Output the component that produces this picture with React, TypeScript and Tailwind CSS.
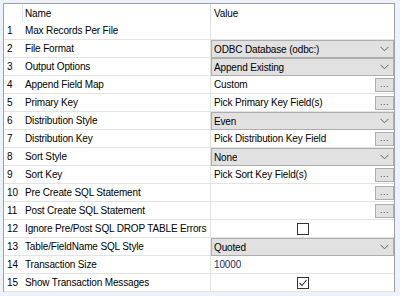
import React from 'react';

type Kind = 'none' | 'combo' | 'pick' | 'check' | 'text';

interface Prop {
  id: number;
  name: string;
  kind: Kind;
  value?: string;
  checked?: boolean;
}

const props: Prop[] = [
  { id: 1, name: 'Max Records Per File', kind: 'none' },
  { id: 2, name: 'File Format', kind: 'combo', value: 'ODBC Database (odbc:)' },
  { id: 3, name: 'Output Options', kind: 'combo', value: 'Append Existing' },
  { id: 4, name: 'Append Field Map', kind: 'pick', value: 'Custom' },
  { id: 5, name: 'Primary Key', kind: 'pick', value: 'Pick Primary Key Field(s)' },
  { id: 6, name: 'Distribution Style', kind: 'combo', value: 'Even' },
  { id: 7, name: 'Distribution Key', kind: 'pick', value: 'Pick Distribution Key Field' },
  { id: 8, name: 'Sort Style', kind: 'combo', value: 'None' },
  { id: 9, name: 'Sort Key', kind: 'pick', value: 'Pick Sort Key Field(s)' },
  { id: 10, name: 'Pre Create SQL Statement', kind: 'pick', value: '' },
  { id: 11, name: 'Post Create SQL Statement', kind: 'pick', value: '' },
  { id: 12, name: 'Ignore Pre/Post SQL DROP TABLE Errors', kind: 'check', checked: false },
  { id: 13, name: 'Table/FieldName SQL Style', kind: 'combo', value: 'Quoted' },
  { id: 14, name: 'Transaction Size', kind: 'text', value: '10000' },
  { id: 15, name: 'Show Transaction Messages', kind: 'check', checked: true },
];

function Chevron() {
  return (
    <svg width="9" height="6" viewBox="0 0 9 6" className="shrink-0">
      <path d="M0.5 0.8 L4.5 4.8 L8.5 0.8" fill="none" stroke="#606060" strokeWidth="1" />
    </svg>
  );
}

function ValueCell({ p }: { p: Prop }) {
  if (p.kind === 'combo') {
    return (
      <div className="h-full flex items-center justify-between bg-[#e1e1e1] border border-[#adadad] pl-[2px] pr-[4px]">
        <span className="truncate">{p.value}</span>
        <Chevron />
      </div>
    );
  }
  if (p.kind === 'pick') {
    return (
      <div className="h-full flex items-center justify-between pl-[3px] border-b border-[#e3e3e3]">
        <span className="truncate">{p.value}</span>
        <div className="w-[19px] h-[14px] bg-[#e1e1e1] border border-[#adadad] flex items-end justify-center leading-none text-[9px] tracking-[0.5px] pb-[2px] text-[#4a3a6a]">
          ...
        </div>
      </div>
    );
  }
  if (p.kind === 'check') {
    return (
      <div className="h-full flex items-center justify-center border-b border-[#e3e3e3]">
        <div className="w-[12px] h-[12px] border border-[#333] bg-white flex items-center justify-center">
          {p.checked && (
            <svg width="10" height="10" viewBox="0 0 10 10">
              <path d="M1.5 5 L4 7.5 L8.5 2" fill="none" stroke="#333" strokeWidth="1.1" />
            </svg>
          )}
        </div>
      </div>
    );
  }
  return (
    <div className="h-full flex items-center pl-[3px] border-b border-[#e3e3e3]">
      <span className="truncate text-[#1a2a6a]">{p.value ?? ''}</span>
    </div>
  );
}

export default function App() {
  return (
    <div
      className="w-[400px] h-[296px] bg-[#edf2fa] pt-[3px] pl-[3px] overflow-hidden text-[10px] tracking-[-0.15px] text-black"
      style={{ fontFamily: '"Liberation Sans", Arial, sans-serif' }}
    >
      <div className="w-[392px] bg-white border-l border-t border-r border-[#a0a0a0] grid grid-cols-[19px_188px_183px] auto-rows-[18px]">
        {/* header */}
        <div className="border-r border-[#e3e3e3]" />
        <div className="flex items-center pl-[2px] border-r border-[#d9d9d9]">Name</div>
        <div className="flex items-center pl-[3px]">Value</div>

        {props.map((p) => (
          <React.Fragment key={p.id}>
            <div className="flex items-center pl-[3px] border-b border-[#e3e3e3]">{p.id}</div>
            <div className="flex items-center pl-[2px] border-b border-r border-[#e3e3e3] whitespace-nowrap overflow-hidden">
              {p.name}
            </div>
            <ValueCell p={p} />
          </React.Fragment>
        ))}
      </div>
    </div>
  );
}
